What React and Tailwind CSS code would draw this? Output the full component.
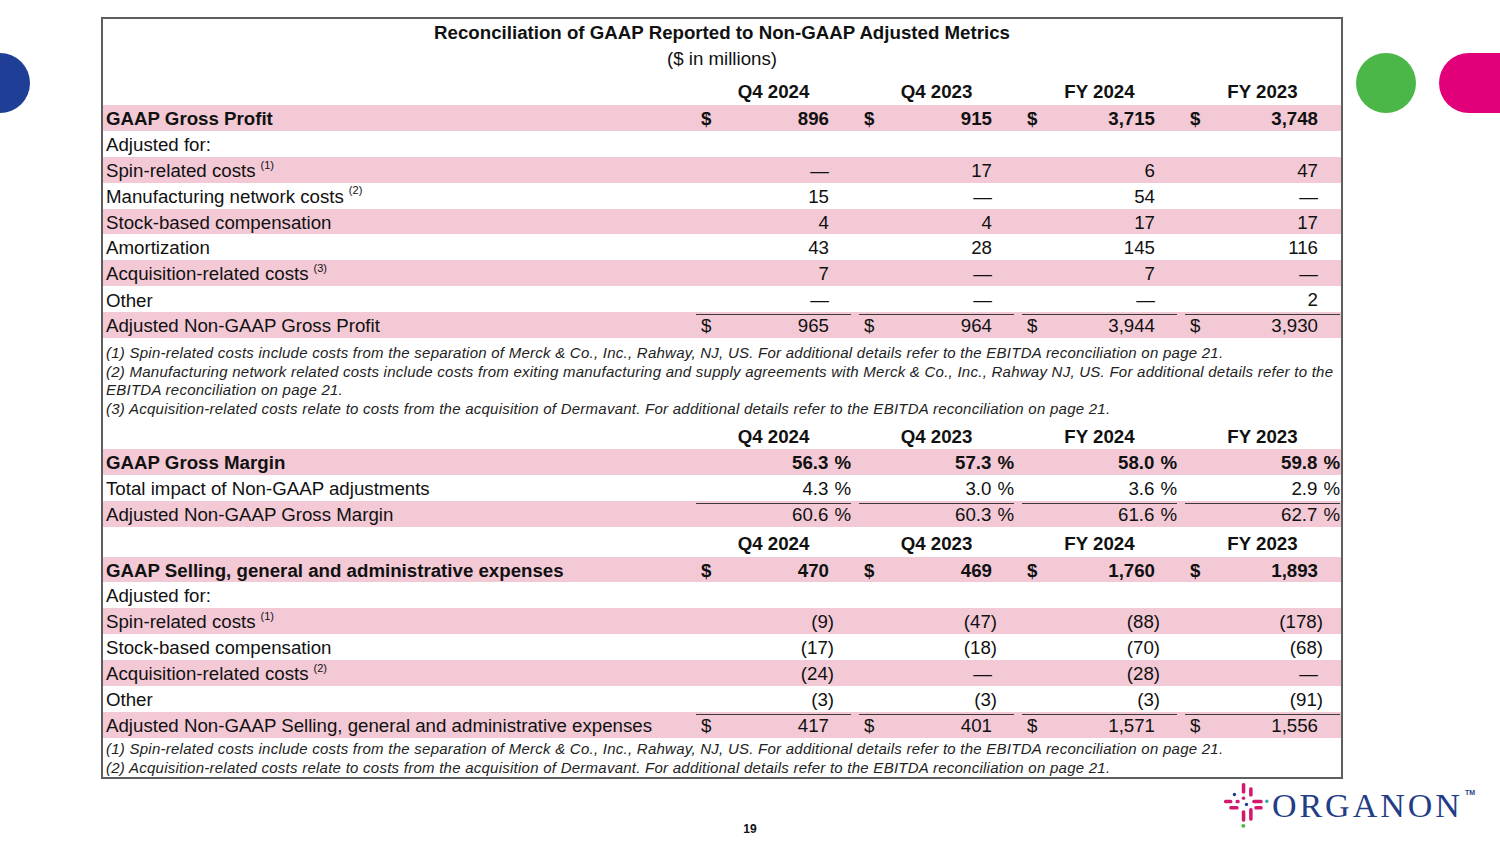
import React from 'react';

const COLS = 'grid grid-cols-[585px_155px_155px_155px_155px] gap-x-[8px]';

const section1 = [
  { label: 'GAAP Gross Profit', bold: true, pink: true, kind: 'usd', values: ['896', '915', '3,715', '3,748'] },
  { label: 'Adjusted for:' },
  { label: 'Spin-related costs', note: '(1)', pink: true, values: ['—', '17', '6', '47'] },
  { label: 'Manufacturing network costs', note: '(2)', values: ['15', '—', '54', '—'] },
  { label: 'Stock-based compensation', pink: true, values: ['4', '4', '17', '17'] },
  { label: 'Amortization', values: ['43', '28', '145', '116'] },
  { label: 'Acquisition-related costs', note: '(3)', pink: true, values: ['7', '—', '7', '—'] },
  { label: 'Other', underline: true, values: ['—', '—', '—', '2'] },
  { label: 'Adjusted Non-GAAP Gross Profit', pink: true, kind: 'usd', values: ['965', '964', '3,944', '3,930'] },
];

const section2 = [
  { label: 'GAAP Gross Margin', bold: true, pink: true, kind: 'pct', values: ['56.3', '57.3', '58.0', '59.8'] },
  { label: 'Total impact of Non-GAAP adjustments', underline: true, kind: 'pct', values: ['4.3', '3.0', '3.6', '2.9'] },
  { label: 'Adjusted Non-GAAP Gross Margin', pink: true, kind: 'pct', values: ['60.6', '60.3', '61.6', '62.7'] },
];

const section3 = [
  { label: 'GAAP Selling, general and administrative expenses', bold: true, pink: true, kind: 'usd', values: ['470', '469', '1,760', '1,893'] },
  { label: 'Adjusted for:' },
  { label: 'Spin-related costs', note: '(1)', pink: true, values: ['(9)', '(47)', '(88)', '(178)'] },
  { label: 'Stock-based compensation', values: ['(17)', '(18)', '(70)', '(68)'] },
  { label: 'Acquisition-related costs', note: '(2)', pink: true, values: ['(24)', '—', '(28)', '—'] },
  { label: 'Other', underline: true, values: ['(3)', '(3)', '(3)', '(91)'] },
  { label: 'Adjusted Non-GAAP Selling, general and administrative expenses', pink: true, kind: 'usd', values: ['417', '401', '1,571', '1,556'] },
];

function Cell({ value, kind, underline }) {
  const line = underline ? 'border-b border-[#3a3a3a]' : '';
  if (kind === 'usd') {
    return (
      <div className={`h-full flex items-center justify-between pl-[5px] pr-[22px] ${line}`}>
        <span>$</span>
        <span>{value}</span>
      </div>
    );
  }
  if (kind === 'pct') {
    return (
      <div className={`h-full flex items-center justify-end ${line}`}>
        <span>{value}</span>
        <span className="ml-[6px]">%</span>
      </div>
    );
  }
  const paren = value.startsWith('(');
  return (
    <div className={`h-full flex items-center justify-end ${paren ? 'pr-[17px]' : 'pr-[22px]'} ${line}`}>
      {value}
    </div>
  );
}

function Row({ row }) {
  return (
    <div className={`${COLS} h-[25.9px] ${row.pink ? 'bg-[#f3c9d6]' : ''} ${row.bold ? 'font-bold' : ''}`}>
      <div className="h-full flex items-center pl-[3px] whitespace-nowrap">
        {row.label}
        {row.note && <span className="text-[11px] font-normal relative -top-[6px] ml-[5px]">{row.note}</span>}
      </div>
      {row.values &&
        row.values.map((v, i) => <Cell key={i} value={v} kind={row.kind} underline={row.underline} />)}
    </div>
  );
}

function Header({ className }) {
  return (
    <div className={`${COLS} font-bold items-end leading-[20px] ${className}`}>
      <div />
      <div className="text-center">Q4 2024</div>
      <div className="text-center">Q4 2023</div>
      <div className="text-center">FY 2024</div>
      <div className="text-center">FY 2023</div>
    </div>
  );
}

function OrganonMark() {
  const pink = '#d0196f';
  return (
    <svg width="46" height="46" viewBox="0 0 44 44">
      {/* top */}
      <rect x="17" y="0" width="3.4" height="10" rx="1.5" fill={pink} />
      <rect x="24" y="4" width="3.4" height="9" rx="1.5" fill={pink} />
      {/* bottom */}
      <rect x="17" y="26" width="3.4" height="11" rx="1.5" fill={pink} />
      <rect x="24" y="24" width="3.4" height="12" rx="1.5" fill={pink} />
      {/* left */}
      <rect x="0" y="16" width="8" height="3.4" rx="1.5" fill={pink} />
      <rect x="5" y="22" width="9" height="3.4" rx="1.5" fill={pink} />
      <rect x="11" y="16" width="4" height="3.4" rx="1.5" fill={pink} />
      {/* right */}
      <rect x="27" y="16" width="10" height="3.4" rx="1.5" fill={pink} />
      <rect x="29" y="22" width="8" height="3.4" rx="1.5" fill={pink} />
      <rect x="17" y="13" width="3.4" height="3" rx="1.5" fill={pink} />
      {/* dots */}
      <circle cx="10" cy="11" r="1.6" fill="#1f3a80" />
      <circle cx="21.5" cy="20.5" r="1.6" fill="#1f3a80" />
      <circle cx="41" cy="17.5" r="1.6" fill="#2aa7b0" />
      <circle cx="18.5" cy="41" r="1.9" fill="#4bb748" />
    </svg>
  );
}

export default function App() {
  return (
    <div className="relative w-[1500px] h-[844px] overflow-hidden bg-white text-[#111] font-['Liberation_Sans',Arial,sans-serif]">
      {/* decorative shapes */}
      <div className="absolute left-[-30px] top-[53px] w-[60px] h-[60px] rounded-full bg-[#1f3e95]" />
      <div className="absolute left-[1356px] top-[53px] w-[60px] h-[60px] rounded-full bg-[#4bb748]" />
      <div className="absolute left-[1439px] top-[53px] w-[110px] h-[60px] rounded-full bg-[#e1007a]" />

      <div className="pt-[17px]">
        <div className="ml-[101px] w-[1242px] h-[762px] border-2 border-[#5e5e5e] text-[18.7px]">
          {/* Title */}
          <div className="pt-[1px] text-center leading-[26px]">
            <div className="font-bold">Reconciliation of GAAP Reported to Non-GAAP Adjusted Metrics</div>
            <div>($ in millions)</div>
          </div>

          <Header className="h-[33px] pb-[3px]" />
          {section1.map((r, i) => <Row key={i} row={r} />)}

          <div className="pt-[6px] pl-[3px] italic text-[15px] tracking-[0.25px] leading-[18.7px] text-[#222] whitespace-nowrap">
            <div>(1) Spin-related costs include costs from the separation of Merck &amp; Co., Inc., Rahway, NJ, US. For additional details refer to the EBITDA reconciliation on page 21.</div>
            <div>(2) Manufacturing network related costs include costs from exiting manufacturing and supply agreements with Merck &amp; Co., Inc., Rahway NJ, US. For additional details refer to the</div>
            <div>EBITDA reconciliation on page 21.</div>
            <div>(3) Acquisition-related costs relate to costs from the acquisition of Dermavant. For additional details refer to the EBITDA reconciliation on page 21.</div>
          </div>

          <Header className="h-[30px] pb-[2px]" />
          {section2.map((r, i) => <Row key={i} row={r} />)}

          <Header className="h-[30px] pb-[3px]" />
          {section3.map((r, i) => <Row key={i} row={r} />)}

          <div className="pt-[1px] pl-[3px] italic text-[15px] tracking-[0.25px] leading-[19px] text-[#222] whitespace-nowrap">
            <div>(1) Spin-related costs include costs from the separation of Merck &amp; Co., Inc., Rahway, NJ, US. For additional details refer to the EBITDA reconciliation on page 21.</div>
            <div>(2) Acquisition-related costs relate to costs from the acquisition of Dermavant. For additional details refer to the EBITDA reconciliation on page 21.</div>
          </div>
        </div>
      </div>

      {/* footer */}
      <div className="grid grid-cols-[1fr_auto_1fr] h-[65px]">
        <div />
        <div className="pt-[42px] text-[12px] font-bold leading-[16px]">19</div>
        <div className="flex justify-end items-start pr-[25px] pt-[4px]">
          <div className="flex items-center gap-[2px]">
            <OrganonMark />
            <span className="font-['Liberation_Serif',serif] text-[34px] leading-[42px] tracking-[3px] text-[#233e86]">ORGANON</span>
            <span className="self-start text-[7px] font-bold text-[#233e86] mt-[5px]">TM</span>
          </div>
        </div>
      </div>
    </div>
  );
}
